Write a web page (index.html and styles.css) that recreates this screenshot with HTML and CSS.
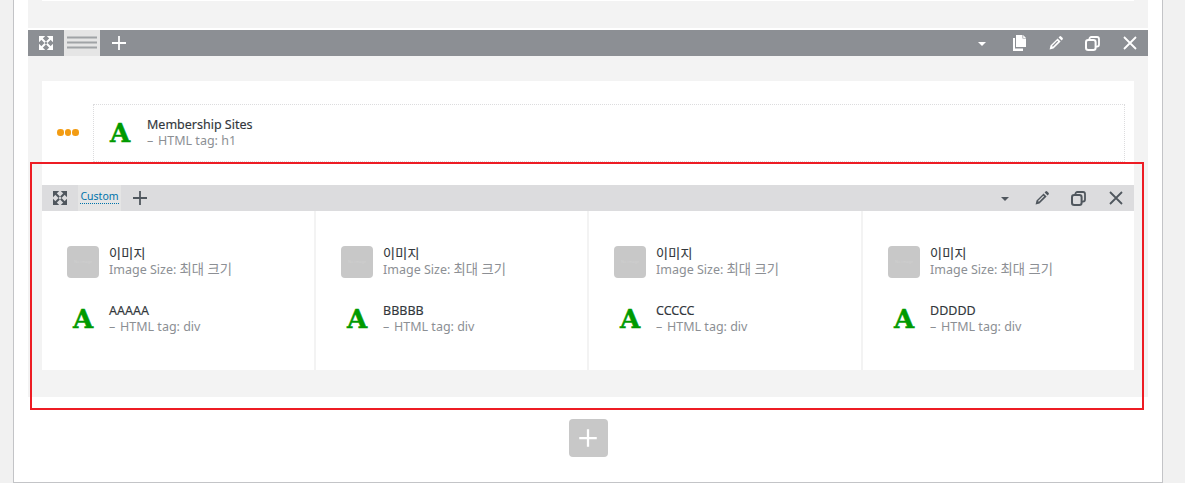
FILE: index.html
```html
<!DOCTYPE html>
<html lang="ko">
<head>
<meta charset="utf-8">
<title>Builder</title>
<link rel="stylesheet" href="styles.css">
</head>
<body>
<svg class="defs" width="0" height="0" aria-hidden="true">
  <defs>
    <symbol id="i-expand" viewBox="0 0 14 14">
      <path d="M0 0h6.2L0 6.2zM14 0v6.2L7.8 0zM14 14H7.8l6.2-6.2zM0 14V7.8L6.2 14z" fill="currentColor"/>
      <path d="M2 2l4.2 4.2M12 2L7.8 6.2M12 12L7.8 7.8M2 12l4.2-4.2" fill="none" stroke="currentColor" stroke-width="2"/>
    </symbol>
    <symbol id="i-plus" viewBox="0 0 16 16">
      <path d="M8 1v14M1 8h14" fill="none" stroke="currentColor" stroke-width="1.8"/>
    </symbol>
    <symbol id="i-files" viewBox="0 0 14 16">
      <path d="M4 0h6.5v3.6H14V12H4z" fill="currentColor"/>
      <path d="M11.2 0 14 2.9h-2.8z" fill="currentColor"/>
      <path d="M1 3h2v10.5h8V16H1z" fill="currentColor"/>
    </symbol>
    <symbol id="i-pencil" viewBox="0 0 14 14">
      <path fill-rule="evenodd" d="M0.6 13.4l0.9-3.9 7.1-7.1 3 3-7.1 7.1zM3 9.9l0.9 0.9 5.2-5.2-0.9-0.9zM9.6 1.4l0.9-0.9a1.2 1.2 0 0 1 1.7 0l1.3 1.3a1.2 1.2 0 0 1 0 1.7l-0.9 0.9z" fill="currentColor"/>
    </symbol>
    <symbol id="i-copy" viewBox="0 0 15 15">
      <rect x="1" y="4" width="9.6" height="10" rx="2.2" fill="none" stroke="currentColor" stroke-width="2"/>
      <path d="M4.4 3.6V3a2 2 0 0 1 2-2H12a2 2 0 0 1 2 2v5.6a2 2 0 0 1-2 2h-1" fill="none" stroke="currentColor" stroke-width="1.8"/>
    </symbol>
    <symbol id="i-close" viewBox="0 0 14 14">
      <path d="M1 1l12 12M13 1L1 13" fill="none" stroke="currentColor" stroke-width="1.8"/>
    </symbol>
    <symbol id="i-lines" viewBox="0 0 30 14">
      <path d="M0 1.5h30M0 6.5h30M0 11.5h30" fill="none" stroke="currentColor" stroke-width="2"/>
    </symbol>
  </defs>
</svg>

<div class="frame">
  <section class="panel">
    <div class="top-strip"></div>

    <div class="toolbar toolbar-dark">
      <div class="tool-group">
        <span class="btn btn-start"><svg class="ic ic-14"><use href="#i-expand"/></svg></span>
        <span class="tab tab-lines"><svg class="ic-lines"><use href="#i-lines"/></svg></span>
        <span class="btn btn-add"><svg class="ic ic-16"><use href="#i-plus"/></svg></span>
      </div>
      <div class="tool-group">
        <span class="btn"><span class="caret"></span></span>
        <span class="btn"><svg class="ic ic-files"><use href="#i-files"/></svg></span>
        <span class="btn"><svg class="ic ic-14"><use href="#i-pencil"/></svg></span>
        <span class="btn"><svg class="ic ic-15"><use href="#i-copy"/></svg></span>
        <span class="btn"><svg class="ic ic-14"><use href="#i-close"/></svg></span>
      </div>
    </div>

    <div class="panel-body">
      <div class="card">
        <div class="heading-row">
          <div class="dots"><i></i><i></i><i></i></div>
          <div class="heading-item">
            <span class="glyph-a">A</span>
            <div class="meta">
              <div class="meta-title">Membership Sites</div>
              <div class="meta-sub"><span class="dash">–</span> HTML tag: h1</div>
            </div>
          </div>
        </div>

        <div class="toolbar toolbar-light">
          <div class="tool-group">
            <span class="btn btn-start"><svg class="ic ic-14"><use href="#i-expand"/></svg></span>
            <span class="tab tab-custom"><span class="tab-label">Custom</span></span>
            <span class="btn btn-add"><svg class="ic ic-16"><use href="#i-plus"/></svg></span>
          </div>
          <div class="tool-group">
            <span class="btn"><span class="caret"></span></span>
            <span class="btn"><svg class="ic ic-14"><use href="#i-pencil"/></svg></span>
            <span class="btn"><svg class="ic ic-15"><use href="#i-copy"/></svg></span>
            <span class="btn"><svg class="ic ic-14"><use href="#i-close"/></svg></span>
          </div>
        </div>

        <div class="columns">
          <div class="column">
            <div class="widget">
              <div class="thumb"><span class="thumb-text">No image</span></div>
              <div class="meta"><div class="meta-title ko">이미지</div><div class="meta-sub">Image Size: <span class="ko-sub">최대 크기</span></div></div>
            </div>
            <div class="widget">
              <span class="glyph-a">A</span>
              <div class="meta"><div class="meta-title">AAAAA</div><div class="meta-sub"><span class="dash">–</span> HTML tag: div</div></div>
            </div>
          </div>
          <div class="column">
            <div class="widget">
              <div class="thumb"><span class="thumb-text">No image</span></div>
              <div class="meta"><div class="meta-title ko">이미지</div><div class="meta-sub">Image Size: <span class="ko-sub">최대 크기</span></div></div>
            </div>
            <div class="widget">
              <span class="glyph-a">A</span>
              <div class="meta"><div class="meta-title">BBBBB</div><div class="meta-sub"><span class="dash">–</span> HTML tag: div</div></div>
            </div>
          </div>
          <div class="column">
            <div class="widget">
              <div class="thumb"><span class="thumb-text">No image</span></div>
              <div class="meta"><div class="meta-title ko">이미지</div><div class="meta-sub">Image Size: <span class="ko-sub">최대 크기</span></div></div>
            </div>
            <div class="widget">
              <span class="glyph-a">A</span>
              <div class="meta"><div class="meta-title">CCCCC</div><div class="meta-sub"><span class="dash">–</span> HTML tag: div</div></div>
            </div>
          </div>
          <div class="column">
            <div class="widget">
              <div class="thumb"><span class="thumb-text">No image</span></div>
              <div class="meta"><div class="meta-title ko">이미지</div><div class="meta-sub">Image Size: <span class="ko-sub">최대 크기</span></div></div>
            </div>
            <div class="widget">
              <span class="glyph-a">A</span>
              <div class="meta"><div class="meta-title">DDDDD</div><div class="meta-sub"><span class="dash">–</span> HTML tag: div</div></div>
            </div>
          </div>
        </div>
      </div>
    </div>
  </section>

  <div class="add-row">
    <span class="add-button"><svg class="ic-add"><use href="#i-plus"/></svg></span>
  </div>

  <div class="highlight"></div>
</div>
</body>
</html>
```

FILE: styles.css
```css
* { box-sizing: border-box; }

html, body {
  margin: 0;
  height: 483px;
  overflow: hidden;
}

body {
  background: #f1f1f1;
  font-family: "Noto Sans", "Noto Sans CJK KR", sans-serif;
  font-size: 13px;
}

.defs { position: absolute; }

.frame {
  position: relative;
  width: 1150px;
  height: 483px;
  margin-left: 13px;
  padding: 0 14px;
  background: #fff;
  border: 1px solid #c3c4c7;
  border-top: 0;
}

.panel {
  background: #f3f3f3;
  height: 397px;
}

.top-strip {
  height: 1px;
  margin: 0 14px 27px;
  background: #fff;
}

.toolbar {
  display: flex;
  justify-content: space-between;
  height: 26px;
}

.toolbar-dark {
  height: 28px;
  padding-top: 2px;
  background: linear-gradient(#fff 2px, #8c8f94 2px);
  color: #fff;
}

.toolbar-light {
  background: #dcdcde;
  color: #50575e;
}

.tool-group { display: flex; }

.btn {
  display: flex;
  align-items: center;
  justify-content: center;
  width: 37px;
}

.btn-start { width: 36px; }
.btn-add { width: 38px; }

.tab {
  display: flex;
  align-items: center;
  justify-content: center;
  background: #e5e5e5;
}

.tab-lines { width: 36px; color: #a0a3a6; }
.tab-custom { width: 43px; }

.tab-label {
  margin-top: -3px;
  font-size: 10.5px;
  line-height: 14px;
  color: #0073aa;
  border-bottom: 1px dotted #0073aa;
}

.ic { display: block; }
.ic-14 { width: 14px; height: 14px; }
.ic-15 { width: 15px; height: 15px; }
.ic-16 { width: 16px; height: 16px; }
.ic-files { width: 14px; height: 16px; }
.ic-lines { display: block; width: 30px; height: 14px; }

.caret {
  width: 0;
  height: 0;
  border-left: 4px solid transparent;
  border-right: 4px solid transparent;
  border-top: 4px solid currentColor;
  margin-top: 2px;
}

.panel-body { padding: 25px 14px 27px; }

.card {
  background: #fff;
  height: 289px;
  display: flex;
  flex-direction: column;
}

.heading-row {
  display: flex;
  align-items: center;
  height: 81px;
  margin-bottom: 23px;
  padding: 23px 9px 0 15px;
}

.dots {
  display: flex;
  gap: 1px;
  width: 36px;
  margin-top: -1px;
}

.dots i {
  width: 6.5px;
  height: 6.5px;
  border-radius: 50%;
  background: #f39c12;
}

.heading-item {
  flex: 1;
  display: flex;
  align-items: center;
  height: 58px;
  padding-left: 16px;
  border: 1px dotted #dcdcde;
}

.glyph-a {
  flex: none;
  width: 37px;
  font-family: "DejaVu Serif", serif;
  font-weight: 700;
  font-size: 26px;
  line-height: 32px;
  color: #009a00;
  -webkit-text-stroke: 0.5px #009a00;
}

.meta-title {
  font-size: 12.5px;
  line-height: 16px;
  color: #32373c;
  -webkit-text-stroke: 0.15px #32373c;
}

.meta-title.ko {
  font-size: 13px;
  letter-spacing: 0.3px;
  -webkit-text-stroke: 0.1px #32373c;
}

.meta-sub {
  font-size: 12.5px;
  line-height: 16px;
  color: #8c8f94;
}

.ko-sub { font-size: 13.3px; }
.dash { margin-right: 1.5px; }

.columns {
  flex: 1;
  display: grid;
  grid-template-columns: 272px 271px 272px 1fr;
  column-gap: 2px;
  background: #f3f3f3;
}

.column {
  display: flex;
  flex-direction: column;
  gap: 24px;
  padding: 34px 0 0 25px;
  background: #fff;
}

.widget {
  display: flex;
  align-items: center;
  height: 33px;
}

.widget .glyph-a {
  width: 42px;
  padding-left: 6px;
}

.thumb {
  flex: none;
  display: flex;
  align-items: center;
  justify-content: center;
  width: 32px;
  height: 32px;
  margin-right: 10px;
  border-radius: 4px;
  background: #c8c8c8;
  overflow: hidden;
}

.thumb-text {
  font-size: 4px;
  line-height: 4px;
  color: #d0d0d0;
  white-space: nowrap;
}

.add-row {
  display: flex;
  justify-content: center;
  padding-top: 22px;
}

.add-button {
  display: flex;
  align-items: center;
  justify-content: center;
  width: 39px;
  height: 38px;
  border-radius: 4px;
  background: #c8c8c8;
  color: #fff;
}

.ic-add { display: block; width: 20px; height: 20px; }

.highlight {
  position: absolute;
  left: 16px;
  top: 162px;
  width: 1114px;
  height: 248px;
  border: 2px solid #ed1c24;
  pointer-events: none;
}
```
